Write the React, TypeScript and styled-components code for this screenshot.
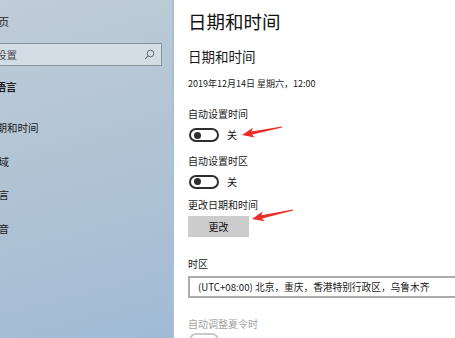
import React from "react";
import styled, { createGlobalStyle } from "styled-components";

const Global = createGlobalStyle`
  html, body { margin: 0; padding: 0; }
  body {
    width: 455px; height: 338px; overflow: hidden;
    font-family: "Noto Sans CJK SC", "Noto Sans", sans-serif;
    background: #fff;
  }
`;

const Page = styled.div`
  position: relative;
  width: 455px;
  height: 338px;
  display: flex;
  overflow: hidden;
`;

const Sidebar = styled.div`
  width: 172px;
  flex: none;
  height: 100%;
  overflow: hidden;
  background: linear-gradient(165deg, #c0ccd7 0%, #b2c4d4 45%, #a1bbd5 100%);
  border-right: 2px solid #a8bfd5;
  display: flex;
  flex-direction: column;
  color: #1c1c1c;
  & > * { flex-shrink: 0; }
`;

const NavText = styled.div<{ $offset: number; $top: number; $bold?: boolean }>`
  font-size: 10.5px;
  line-height: 14px;
  height: 14px;
  white-space: nowrap;
  margin-top: ${(p) => p.$top}px;
  margin-left: ${(p) => p.$offset}px;
  font-weight: ${(p) => (p.$bold ? 700 : 400)};
`;

const Search = styled.div`
  margin-top: 14px;
  margin-left: -40px;
  width: 202px;
  height: 23px;
  box-sizing: border-box;
  border: 1px solid #8794a0;
  background: #d2dde6;
  display: flex;
  align-items: center;
  justify-content: space-between;
  padding: 0 6px 0 14px;
  font-size: 10.5px;
  color: #4a4a4a;
`;

const Content = styled.div`
  flex: 1;
  min-width: 0;
  height: 100%;
  padding-left: 14px;
  display: flex;
  flex-direction: column;
  align-items: flex-start;
  color: #111;
  overflow: hidden;
  & > * { flex-shrink: 0; }
`;

const Title = styled.div`
  margin-top: 9px;
  font-size: 18.5px;
  line-height: 24px;
  color: #111;
`;

const SubTitle = styled.div`
  margin-top: 13.5px;
  font-size: 13.5px;
  line-height: 18px;
  color: #1a1a1a;
`;

const Text = styled.div<{ $top: number; $muted?: boolean; $size?: number }>`
  margin-top: ${(p) => p.$top}px;
  font-size: ${(p) => p.$size ?? 10}px;
  line-height: 14px;
  height: 14px;
  white-space: nowrap;
  color: ${(p) => (p.$muted ? "#a3a3a3" : "#1a1a1a")};
`;

const ToggleRow = styled.div<{ $top: number }>`
  margin-top: ${(p) => p.$top}px;
  display: flex;
  align-items: center;
  gap: 8px;
  font-size: 10px;
  line-height: 14px;
  height: 14px;
  padding-left: 1px;
`;

const Toggle = styled.div<{ $muted?: boolean }>`
  width: 30px;
  height: 14px;
  box-sizing: border-box;
  border: 2px solid ${(p) => (p.$muted ? "#c8c8c8" : "#2e2e2e")};
  border-radius: 7px;
  display: flex;
  align-items: center;
  padding-left: 3px;
`;

const Knob = styled.span`
  width: 7px;
  height: 7px;
  border-radius: 50%;
  background: #2e2e2e;
`;

const Button = styled.div`
  margin-top: 4.5px;
  width: 61px;
  height: 21px;
  background: #cccccc;
  display: flex;
  align-items: center;
  justify-content: center;
  font-size: 10px;
  color: #111;
`;

const Select = styled.div`
  margin-top: 5.5px;
  width: 300px;
  height: 22px;
  box-sizing: border-box;
  border: 2px solid #ababab;
  display: flex;
  align-items: center;
  padding-left: 8px;
  font-size: 9.7px;
  white-space: nowrap;
  color: #1a1a1a;
`;

const Overlay = styled.svg`
  position: absolute;
  left: 0;
  top: 0;
  pointer-events: none;
`;

function arrowPoints(tx: number, ty: number, px: number, py: number) {
  const dx = px - tx;
  const dy = py - ty;
  const len = Math.hypot(dx, dy);
  const ux = dx / len;
  const uy = dy / len;
  const nx = -uy;
  const ny = ux;
  const headLen = 12;
  const headW = 5;
  const bx = px - ux * headLen;
  const by = py - uy * headLen;
  const nb = 1.6;
  const nt = 0.4;
  const pts = [
    [tx + nx * nt, ty + ny * nt],
    [bx + ux * 2 + nx * nb, by + uy * 2 + ny * nb],
    [bx + nx * headW, by + ny * headW],
    [px, py],
    [bx - nx * headW, by - ny * headW],
    [bx + ux * 2 - nx * nb, by + uy * 2 - ny * nb],
    [tx - nx * nt, ty - ny * nt],
  ];
  return pts.map((p) => p.map((v) => v.toFixed(1)).join(",")).join(" ");
}

const SearchIcon = () => (
  <svg width="11" height="11" viewBox="0 0 11 11">
    <circle cx="6.5" cy="4.5" r="3.3" fill="none" stroke="#6a6a6a" strokeWidth="1" />
    <line x1="4.2" y1="6.8" x2="1.2" y2="9.8" stroke="#6a6a6a" strokeWidth="1.1" />
  </svg>
);

export default function App() {
  return (
    <>
      <Global />
      <Page>
        <Sidebar>
          <NavText $offset={-12} $top={15}>主页</NavText>
          <Search>
            <span>查找设置</span>
            <SearchIcon />
          </Search>
          <NavText $offset={-36} $top={14} $bold>时间和语言</NavText>
          <NavText $offset={-14} $top={27}>日期和时间</NavText>
          <NavText $offset={-12} $top={19.5}>区域</NavText>
          <NavText $offset={-12} $top={19.5}>语言</NavText>
          <NavText $offset={-12} $top={20}>语音</NavText>
        </Sidebar>
        <Content>
          <Title>日期和时间</Title>
          <SubTitle>日期和时间</SubTitle>
          <Text $top={12.5} $size={9}>2019年12月14日 星期六，12:00</Text>
          <Text $top={16}>自动设置时间</Text>
          <ToggleRow $top={7}>
            <Toggle><Knob /></Toggle>
            <span>关</span>
          </ToggleRow>
          <Text $top={11.5}>自动设置时区</Text>
          <ToggleRow $top={7}>
            <Toggle><Knob /></Toggle>
            <span>关</span>
          </ToggleRow>
          <Text $top={9}>更改日期和时间</Text>
          <Button>更改</Button>
          <Text $top={19.5}>时区</Text>
          <Select>(UTC+08:00) 北京，重庆，香港特别行政区，乌鲁木齐</Select>
          <Text $top={19} $muted>自动调整夏令时</Text>
          <ToggleRow $top={2}>
            <Toggle $muted />
          </ToggleRow>
        </Content>
        <Overlay width="455" height="338" viewBox="0 0 455 338">
          <polygon points={arrowPoints(282, 127, 242, 135)} fill="#ee2b24" />
          <polygon points={arrowPoints(293, 210, 252, 219)} fill="#ee2b24" />
        </Overlay>
      </Page>
    </>
  );
}
